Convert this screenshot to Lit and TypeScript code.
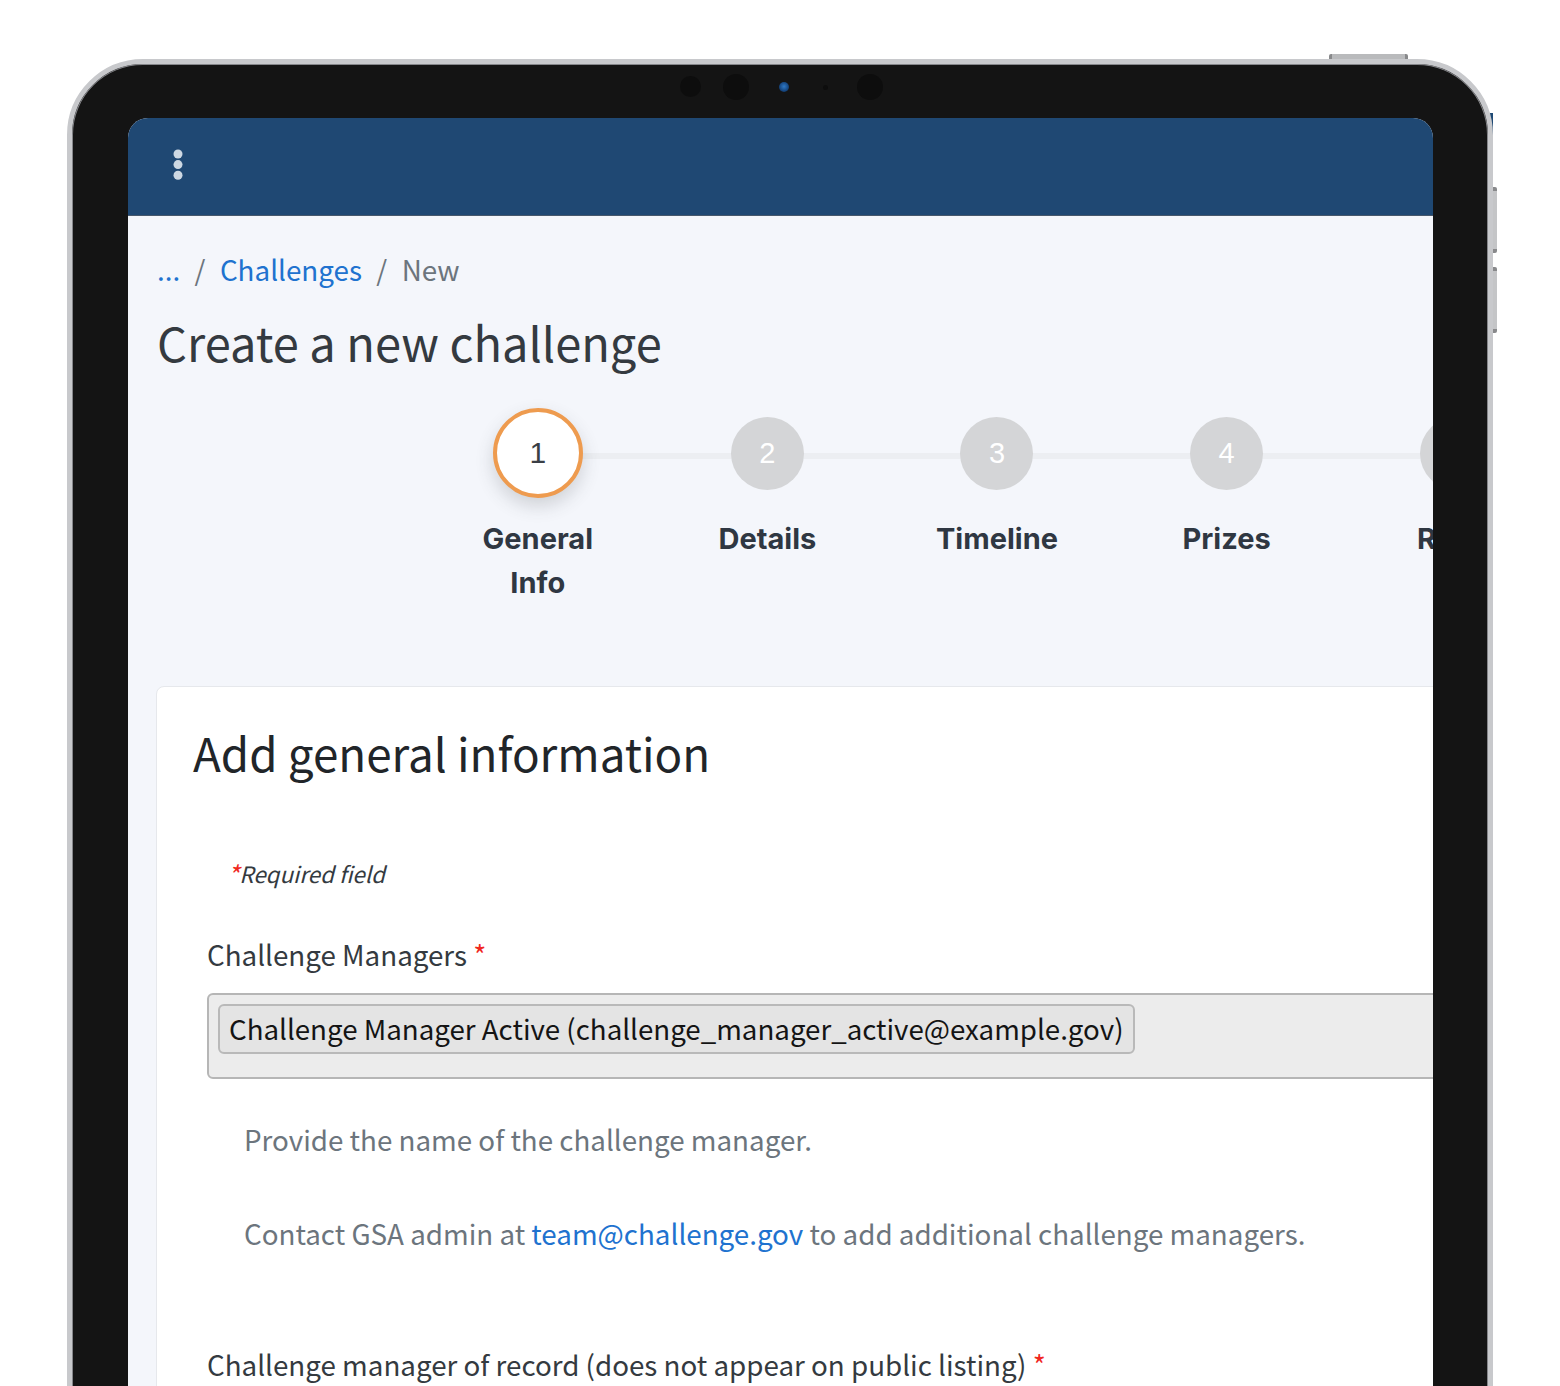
import { LitElement, html, css } from "lit";
import { customElement } from "lit/decorators.js";

const STEPS = ["General Info", "Details", "Timeline", "Prizes", "Rules"];

@customElement("app-root")
export class AppRoot extends LitElement {
  static styles = css`
    :host {
      display: block;
      height: 1386px;
      overflow: hidden;
      background: #fff;
      font-family: "Noto Sans CJK SC", "Noto Sans", sans-serif;
      color: #343a40;
    }
    * { box-sizing: border-box; }
    .stage { position: relative; z-index: 0; padding: 59px 67px 0 67px; height: 1386px; }
    .device {
      position: relative;
      height: 1500px;
      padding: 54px 55px 0 56px;
      background: #141414;
      border: 5px solid #c8c9cc;
      border-radius: 76px;
      box-shadow: inset 0 0 0 1px #85868a;
    }
    .btn { position: absolute; }
    .btn.top {
      left: 1257px; top: -10px; width: 79px; height: 5px;
      border-radius: 2px 2px 0 0;
      background: linear-gradient(90deg, #88898b 0, #88898b 3px, #b9babc 3px, #b9babc 76px, #88898b 76px);
    }
    .btn.r1, .btn.r2 {
      left: 1421px; width: 4px; height: 66px;
      border-radius: 0 2px 2px 0;
      background: linear-gradient(180deg, #88898b 0, #88898b 4px, #c4c5c7 4px, #c4c5c7 62px, #88898b 62px);
    }
    .btn.r1 { top: 123px; }
    .btn.r2 { top: 203px; }
    .sliver { position: absolute; left: 1417px; top: 49px; width: 4px; height: 22px; background: #1f4a75; z-index: -1; }
    .cam { position: absolute; border-radius: 50%; background: #0d0d0d; }
    .cam.a { left: 608px; top: 12px; width: 21px; height: 21px; }
    .cam.b { left: 651px; top: 10px; width: 26px; height: 26px; }
    .cam.c { left: 707px; top: 18px; width: 10px; height: 10px; background: radial-gradient(circle at 50% 45%, #2f78c4 0, #174a86 55%, #0c2340 100%); }
    .cam.d { left: 751px; top: 21px; width: 5px; height: 5px; }
    .cam.e { left: 785px; top: 10px; width: 26px; height: 26px; }

    .screen {
      height: 1400px;
      background: #f4f6fb;
      border-radius: 20px 20px 0 0;
      overflow: hidden;
    }
    .topbar {
      height: 98px;
      background: #1f4873;
      border-bottom: 1px solid #47586c;
      padding: 31px 0 0 45px;
    }
    .topbar svg { display: block; }
    .content { padding: 33px 0 0 28px; width: 1500px; }
    .crumbs {
      display: flex;
      gap: 14.4px;
      padding-left: 1px;
      font-size: 27.8px;
      line-height: 40px;
      color: #6c757d;
    }
    .crumbs a { color: #2072cf; text-decoration: none; }
    h1 {
      margin: 19px 0 0 1px;
      font-size: 47px;
      line-height: 68px;
      font-weight: 400;
      color: #343a40;
    }
    .steps {
      display: grid;
      grid-template-columns: repeat(5, 229.6px);
      margin: 32px 0 0 267px;
      height: 278px;
    }
    .step { position: relative; display: flex; flex-direction: column; align-items: center; }
    .step:not(:last-child)::after {
      content: "";
      position: absolute;
      left: 50%;
      top: 45px;
      width: 100%;
      height: 6px;
      background: #eceef2;
    }
    .node { height: 90px; display: flex; align-items: center; justify-content: center; position: relative; z-index: 1; }
    .circle {
      width: 73px;
      height: 73px;
      border-radius: 50%;
      background: #d4d5d7;
      color: #fff;
      display: flex;
      align-items: center;
      justify-content: center;
      font-family: "Liberation Sans", sans-serif;
      font-size: 29px;
    }
    .active .circle {
      width: 90px;
      height: 90px;
      background: #fff;
      border: 4px solid #ee9b4f;
      color: #3a3f45;
      font-size: 30px;
      box-shadow: 0 8px 18px rgba(60, 64, 70, 0.2);
    }
    .name {
      margin-top: 19px;
      width: 130px;
      text-align: center;
      font-family: Inter, sans-serif;
      font-weight: 700;
      font-size: 29px;
      line-height: 44px;
      color: #2f3742;
    }
    .step:not(.active) .name { white-space: nowrap; display: flex; justify-content: center; }
    .card {
      width: 1400px;
      height: 800px;
      background: #fff;
      border: 1px solid #e6e8ec;
      border-radius: 8px;
      padding: 30px 36px;
    }
    h2 {
      margin: 0;
      font-size: 45.75px;
      line-height: 70px;
      font-weight: 400;
      color: #212529;
    }
    .req {
      margin: 68px 0 0 34px;
      font-size: 22.4px;
      line-height: 36px;
      font-style: italic;
      color: #343a40;
    }
    .star { color: #f0281e; }
    .req .star { font-size: 26px; line-height: 0; vertical-align: -2px; }
    .form { padding-left: 14px; }
    .label { font-size: 27.75px; line-height: 40px; color: #343a40; margin-top: 43px; }
    .label .star { font-size: 28px; line-height: 0; }
    .input {
      margin-top: 19px;
      height: 86px;
      width: 1300px;
      background: #ececec;
      border: 2px solid #b6b6b6;
      border-radius: 6px;
      padding: 9px;
    }
    .chip {
      display: inline-block;
      height: 50px;
      padding: 0 9px;
      background: #e4e4e4;
      border: 2px solid #b9b9b9;
      border-radius: 6px;
      color: #141414;
      font-size: 27.7px;
      line-height: 45px;
      white-space: nowrap;
    }
    .help { margin: 0 0 0 37px; font-size: 27.75px; line-height: 40px; color: #6c757d; }
    .help.one { margin-top: 40px; }
    .help.two { margin-top: 54px; }
    .help a { color: #2072cf; text-decoration: none; }
    .label.last { margin-top: 91px; }
  `;

  render() {
    return html`
      <div class="stage">
        <div class="device">
          <div class="btn top"></div>
          <div class="btn r1"></div>
          <div class="btn r2"></div>
          <div class="sliver"></div>
          <div class="cam a"></div>
          <div class="cam b"></div>
          <div class="cam c"></div>
          <div class="cam d"></div>
          <div class="cam e"></div>
          <div class="screen">
            <div class="topbar">
              <svg width="10" height="32" viewBox="0 0 10 32" fill="#cdd8e3">
                <circle cx="5" cy="5" r="4.5"></circle>
                <circle cx="5" cy="15.6" r="4.5"></circle>
                <circle cx="5" cy="26.2" r="4.5"></circle>
              </svg>
            </div>
            <div class="content">
              <nav class="crumbs"><a>...</a><span>/</span><a>Challenges</a><span>/</span><span>New</span></nav>
              <h1>Create a new challenge</h1>
              <div class="steps">
                ${STEPS.map(
                  (s, i) => html`
                    <div class="step ${i === 0 ? "active" : ""}">
                      <div class="node"><div class="circle">${i + 1}</div></div>
                      <div class="name">${s}</div>
                    </div>
                  `
                )}
              </div>
              <section class="card">
                <h2>Add general information</h2>
                <div class="req"><span class="star">*</span>Required field</div>
                <div class="form">
                  <div class="label">Challenge Managers <span class="star">*</span></div>
                  <div class="input"><span class="chip">Challenge Manager Active (challenge_manager_active@example.gov)</span></div>
                  <p class="help one">Provide the name of the challenge manager.</p>
                  <p class="help two">Contact GSA admin at <a>team@challenge.gov</a> to add additional challenge managers.</p>
                  <div class="label last">Challenge manager of record (does not appear on public listing) <span class="star">*</span></div>
                </div>
              </section>
            </div>
          </div>
        </div>
      </div>
    `;
  }
}
